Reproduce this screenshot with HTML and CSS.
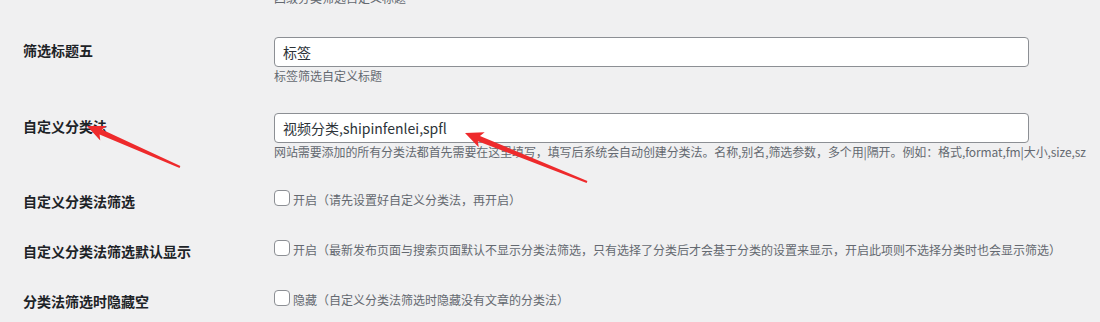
FILE: index.html
```html
<!DOCTYPE html>
<html lang="zh-CN">

<head>
  <meta charset="UTF-8">
  <meta name="viewport" content="width=device-width, initial-scale=1.0">
  <title>分类法筛选设置</title>
  <link rel="stylesheet" href="styles.css">
</head>

<body>
  <div class="wrap">
    <div class="form-table">
      <!-- ligne précédente, coupée en haut -->
      <div class="row row-tail">
        <div class="row-label"></div>
        <div class="row-field">
          <p class="description">四级分类筛选自定义标题</p>
        </div>
      </div>

      <div class="row">
        <div class="row-label">筛选标题五</div>
        <div class="row-field">
          <input type="text" class="regular-text" value="标签">
          <p class="description">标签筛选自定义标题</p>
        </div>
      </div>

      <div class="row">
        <div class="row-label">自定义分类法</div>
        <div class="row-field">
          <input type="text" class="regular-text" value="视频分类,shipinfenlei,spfl">
          <p class="description description-long">网站需要添加的所有分类法都首先需要在这里填写，填写后系统会自动创建分类法。名称,别名,筛选参数，多个用|隔开。例如：格式,format,fm|大小,size,sz</p>
        </div>
      </div>

      <div class="row row-check">
        <div class="row-label">自定义分类法筛选</div>
        <div class="row-field">
          <label class="check"><span class="box"></span>开启（请先设置好自定义分类法，再开启）</label>
        </div>
      </div>

      <div class="row row-check">
        <div class="row-label">自定义分类法筛选默认显示</div>
        <div class="row-field">
          <label class="check"><span class="box"></span>开启（最新发布页面与搜索页面默认不显示分类法筛选，只有选择了分类后才会基于分类的设置来显示，开启此项则不选择分类时也会显示筛选）</label>
        </div>
      </div>

      <div class="row row-check">
        <div class="row-label">分类法筛选时隐藏空</div>
        <div class="row-field">
          <label class="check"><span class="box"></span>隐藏（自定义分类法筛选时隐藏没有文章的分类法）</label>
        </div>
      </div>
    </div>

    <!-- flèches d'annotation -->
    <svg class="arrows" width="1100" height="322" viewBox="0 0 1100 322">
      <polygon transform="translate(87 135) rotate(23.8)" points="0,0 18,-8 15,-2.8 101.6,-1 101.6,1 15,2.8 18,8" />
      <polygon transform="translate(465 142) rotate(21.9)" points="0,0 18,-8 15,-2.8 131.5,-1 131.5,1 15,2.8 18,8" />
    </svg>
  </div>
</body>

</html>
```

FILE: styles.css
```css
/* Styles généraux */
body {
  font-family: "Noto Sans CJK SC", "Noto Sans", sans-serif;
  margin: 0;
  padding: 0;
  background-color: #f0f0f1;
  color: #1d2327;
  overflow: hidden;
}

.wrap {
  position: relative;
  height: 322px;
}

/* Tableau du formulaire */
.form-table {
  padding-left: 23px;
}

.row {
  display: flex;
}

.row-label {
  width: 251px;
  flex-shrink: 0;
  padding-top: 19px;
  font-size: 14px;
  line-height: 18px;
  font-weight: 600;
}

.row-field {
  padding: 15px 0;
}

.row-tail {
  margin-top: -9px;
}

.row-tail .row-label {
  padding-top: 0;
}

.row-tail .row-field {
  padding: 0 0 17px;
}

.regular-text {
  box-sizing: border-box;
  display: block;
  width: 755px;
  height: 30px;
  margin: 0;
  padding: 0 8px;
  border: 1px solid #8c8f94;
  border-radius: 4px;
  background-color: #fff;
  font-family: "Noto Sans CJK SC", "Noto Sans", sans-serif;
  font-size: 14px;
  color: #2c3338;
}

.description {
  margin: 2px 0 0;
  font-size: 12px;
  line-height: 14px;
  color: #646970;
  white-space: nowrap;
}

.description-long {
  letter-spacing: -0.1px;
}

.row-tail .description {
  margin: 0;
}

/* Cases à cocher */
.row-check .row-field {
  padding: 15px 0;
}

.row-check .row-label {
  padding-top: 18px;
}

.check {
  display: flex;
  align-items: center;
  height: 20px;
  font-size: 12px;
  color: #646970;
  white-space: nowrap;
}

.box {
  box-sizing: border-box;
  width: 16px;
  height: 16px;
  margin: -3px 3px 0 0;
  border: 1px solid #8c8f94;
  border-radius: 4px;
  background-color: #fff;
}

/* Annotations */
.arrows {
  position: absolute;
  top: 0;
  left: 0;
  pointer-events: none;
}

.arrows polygon {
  fill: #ee2a2c;
}
```
